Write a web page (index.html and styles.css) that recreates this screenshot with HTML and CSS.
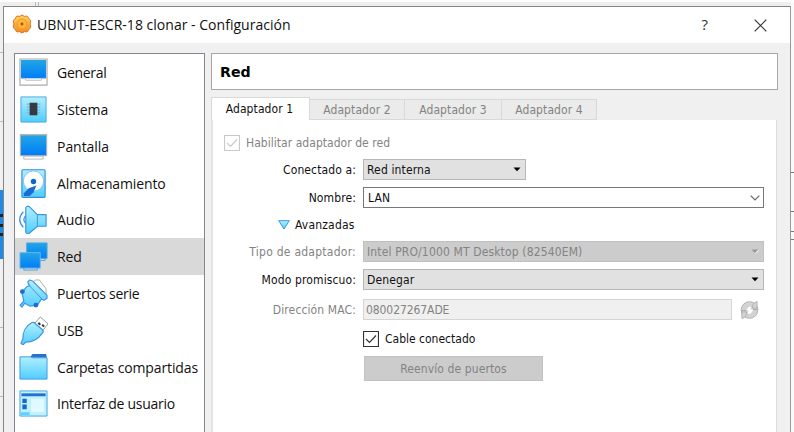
FILE: index.html
```html
<!DOCTYPE html>
<html lang="es">
<head>
<meta charset="utf-8">
<title>UBNUT-ESCR-18 clonar - Configuración</title>
<link rel="stylesheet" href="styles.css">
</head>
<body>
<svg class="defs" width="0" height="0" aria-hidden="true">
  <defs>
    <linearGradient id="screen" x1="0" y1="0" x2="0" y2="1"><stop offset="0" stop-color="#22a6e4"/><stop offset="1" stop-color="#007cf9"/></linearGradient>
    <linearGradient id="sky" x1="0" y1="0" x2="0" y2="1"><stop offset="0" stop-color="#b2efff"/><stop offset="1" stop-color="#50cdff"/></linearGradient>
    <linearGradient id="gold" x1="0" y1="0" x2="0" y2="1"><stop offset="0" stop-color="#ffd75c"/><stop offset="1" stop-color="#f58a1c"/></linearGradient>
  </defs>
</svg>
<div class="backdrop left-edge"><i class="line l1"></i><i class="line l2"></i><i class="tile"></i><i class="line l3"></i><i class="line l4"></i></div>
<div class="backdrop right-edge"><i class="line r1"></i><i class="line r2"></i><i class="line r3"></i><i class="line r4"></i></div>
<i class="notch"></i>
<main class="dialog">
  <header class="titlebar">
    <svg class="gear" viewBox="0 0 20 20"><path d="M7.500 2.500Q10-.5 12.500 2.500 16 1 16.500 4.500 20 6 18 10 20 14 16.500 15.500 16 19 12.500 17.500 10 20.500 7.500 17.500 4 19 3.500 15.500 0 14 2 10 0 6 3.500 4.500 4 1 7.500 2.500z" fill="url(#gold)" stroke="#dd7028" stroke-linejoin="round"/><circle cx="10" cy="10" r="5" fill="#ffb63c" stroke="#ef982b"/><circle cx="10" cy="10" r="1.400" fill="#b9451c"/></svg>
    <h1>UBNUT-ESCR-18 clonar - Configuración</h1>
    <span class="help">?</span>
    <svg class="close" viewBox="0 0 13 13"><path d="M.7.7l11.600 11.600M12.300.7.7 12.300" stroke="#333" stroke-width="1.200"/></svg>
  </header>
  <div class="content">
    <nav class="sidebar">
      <a class="item tight"><svg viewBox="0 0 30 30"><path d="M1 1h28v27H1z" fill="#fff" stroke="#aaa" stroke-width="1.200"/><path d="M2 2h26v19H2z" fill="url(#screen)"/><path d="M2 21h4l1 2h16l1-2h4" fill="none" stroke="#bbb"/></svg><span>General</span></a>
      <a class="item plain"><svg viewBox="0 0 30 30"><path d="M2 2h26v26H2z" fill="url(#sky)" stroke="#4da8df"/><path d="M8 9.500h14M8 12.500h14M8 15.500h14M8 18.500h14" stroke="#8ab"/><path d="M11 8h8v13h-8z" fill="#333a43"/></svg><span>Sistema</span></a>
      <a class="item plain"><svg viewBox="0 0 30 30"><path d="M.8 2h28.400v23H.8z" fill="#b5b5b5"/><path d="M2 3.500h26V24H2z" fill="url(#screen)"/><path d="M5 25h20v3H5z" fill="#fff" stroke="#b5b5b5"/></svg><span>Pantalla</span></a>
      <a class="item"><svg viewBox="0 0 30 30"><rect x="3" y=".8" width="24" height="28.500" rx="1" fill="url(#sky)" stroke="#318fdc" stroke-width="1.200"/><circle cx="15" cy="12.500" r="10.500" fill="#fff" stroke="#80c5ee"/><circle cx="15" cy="13" r="2.800" fill="#0869d3"/><path d="m18 17-8 3-5 5v3h6l4-4z" fill="#176dd1"/></svg><span>Almacenamiento</span></a>
      <a class="item plain"><svg viewBox="0 0 30 30"><path d="M4.500 7Q-3 15 4.500 23M7 11Q3 15 7 19" fill="none" stroke="#3d94e0" stroke-width="1.300"/><path d="M7 3q1-3 4-1l8 8h9v12h-9l-8 7q-3 2-4-1z" fill="url(#sky)" stroke="#3d94e0" stroke-width="1.200"/><path d="M19 10v12" stroke="#3d94e0"/></svg><span>Audio</span></a>
      <a class="item active"><svg viewBox="0 0 30 30"><path d="M8 1h21v16H8z" fill="url(#screen)" stroke="#4aa4df"/><path d="M21 17h6v2h-6z" fill="#c9eaff" stroke="#579ac9"/><path d="M1 11h21v16H1z" fill="url(#screen)" stroke="#68b8ef"/><path d="M5 27h14v2H5z" fill="#c9eaff" stroke="#579ac9"/></svg><span>Red</span></a>
      <a class="item tight"><svg viewBox="0 0 30 30"><path d="m15 3 2-2h4l7 9v7z" fill="#fff" stroke="#aaa"/><path d="m9 3 2-2 3 1 15 15v3l-3 2-3-1-4 6-8 1-5-3-3 4-2-2 4-4-2-9 5-6 3-1z" fill="url(#sky)" stroke="#3d94e0" stroke-width="1.200" stroke-linejoin="round"/><path d="m9 5 15 16" stroke="#3d94e0"/><circle cx="3.500" cy="13" r="2.500" fill="#176dd1"/><circle cx="17.500" cy="27" r="2.500" fill="#176dd1"/></svg><span>Puertos serie</span></a>
      <a class="item tight"><svg viewBox="0 0 30 30"><path d="m16 8 6-7 8 7-6 8z" fill="#fff" stroke="#999"/><path d="m20 7 2 2m2 0 2 2" stroke="#333" stroke-width="2"/><path d="M13 7q2-1 4 1l7 6q2 2 0 4c-5 7-10 9-17 9l-3 3-2-2 2-4C4 16 6 11 13 7z" fill="url(#sky)" stroke="#3d94e0" stroke-width="1.200"/></svg><span>USB</span></a>
      <a class="item"><svg viewBox="0 0 30 30"><path d="m11 5 3-4h14l1 4z" fill="#2b70cf"/><path d="M1 4h11l2 1h15v22H1z" fill="url(#sky)" stroke="#3d9bdd"/></svg><span>Carpetas compartidas</span></a>
      <a class="item tight"><svg viewBox="0 0 30 30"><path d="M1 2h28v26H1z" fill="#bff1ff" stroke="#45a5df"/><path d="M2.500 4.500h25v3h-25z" fill="#246fcf"/><path d="M3.500 10h4.500v4.500H3.500zm0 6h4.500v5H3.500z" fill="#1765ca"/><path d="M12.500 10H26v14H12.500z" fill="#e0faff"/><path d="M2 24h9v3H2z" fill="#5ed2ff"/></svg><span>Interfaz de usuario</span></a>
    </nav>
    <section class="page">
      <h2>Red</h2>
      <div class="tabs"><span class="tab current">Adaptador 1</span><span class="tab">Adaptador 2</span><span class="tab wide">Adaptador 3</span><span class="tab">Adaptador 4</span></div>
      <div class="panel">
        <div class="enable disabled"><svg class="check" viewBox="0 0 16 16"><path d="M.5.5h15v15H.5z"/><path d="m3 8 3.500 3.500 6.500-7"/></svg><span>Habilitar adaptador de red</span></div>
        <div class="row"><label>Conectado a:</label><div class="field combo short"><span>Red interna</span><svg class="arrow" viewBox="0 0 8 5"><path d="M.5.500h7L4 4.300z"/></svg></div></div>
        <div class="row name"><label>Nombre:</label><div class="field input"><span>LAN</span><svg class="chevron" viewBox="0 0 10 6"><path d="m.7.700 4.300 4.300L9.300.7" fill="none" stroke="#666" stroke-width="1.200"/></svg></div></div>
        <div class="advanced"><svg viewBox="0 0 12 10"><path d="M.7.700h10.600L6 9z" fill="url(#sky)" stroke="#3699e5"/></svg><span>Avanzadas</span></div>
        <div class="row disabled type"><label>Tipo de adaptador:</label><div class="field combo"><span>Intel PRO/1000 MT Desktop (82540EM)</span><svg class="arrow" viewBox="0 0 8 5"><path d="M.5.500h7L4 4.300z"/><path class="glint" d="m4 4.700 4-4"/></svg></div></div>
        <div class="row mode"><label>Modo promiscuo:</label><div class="field combo"><span>Denegar</span><svg class="arrow" viewBox="0 0 8 5"><path d="M.5.500h7L4 4.300z"/></svg></div></div>
        <div class="row disabled mac"><label>Dirección MAC:</label><div class="field"><span>080027267ADE</span></div><svg class="refresh" viewBox="0 0 20 20"><circle cx="10" cy="10" r="8.800" fill="#d2d2d2" stroke="#b2b2b2"/><path d="M14 3l4-2v7h-5zM6 17l-4 2v-7h5z" fill="#d2d2d2" stroke="#b2b2b2"/><path d="M2 10.500h4.500L9 6.500h3l-1 3h3.500L11 14H8l1-3.500z" fill="#fff"/><path d="M1.500 10.500h5M13.500 9.500h5" stroke="#aaa"/></svg></div>
        <div class="cable"><svg class="check" viewBox="0 0 16 16"><path d="M.5.5h15v15H.5z"/><path d="m3 8 3.500 3.500 6.500-7"/></svg><span>Cable conectado</span></div>
        <div class="forward"><span>Reenvío de puertos</span></div>
      </div>
    </section>
  </div>
</main>
</body>
</html>
```
FILE: styles.css
```css
* { box-sizing: border-box; }
body { margin: 0; width: 794px; height: 432px; overflow: hidden; position: relative; background: #eee; border-top: 2px solid #fff; font: 12px "DejaVu Sans Condensed", "DejaVu Sans", sans-serif; color: #111; }
svg { display: block; flex: none; }
.defs { position: absolute; }
.backdrop { position: absolute; top: 0; height: 432px; width: 3px; }
.left-edge { left: 0; background: #f0f0f0; }
.right-edge { right: 0; background: #fafafa; }
.line { position: absolute; left: 0; width: 100%; height: 1px; background: #bbb; }
.l1 { top: 50px; } .l2 { top: 119px; } .l3 { top: 325px; } .l4 { top: 394px; }
.r1 { top: 170px; } .r2 { top: 209px; } .r3 { top: 229px; } .r4 { top: 237px; }
.r1, .r2, .r3, .r4 { background: #777; }
.tile { position: absolute; top: 188px; left: 0; width: 3px; height: 69px; background: linear-gradient(#222, #222) 0 24px / 3px 3px no-repeat, linear-gradient(#222, #222) 0 34px / 3px 3px no-repeat, linear-gradient(#222, #222) 0 43px / 3px 3px no-repeat, #1e8ae5; }
.notch { position: absolute; left: 35px; top: 0; width: 4px; height: 4px; border: solid #bbb; border-width: 0 1px; }
.dialog { position: relative; margin: 4px 3px 0; height: 440px; width: 788px; background: #f0f0f0; border: 1px solid #858585; border-right-color: #999; display: flex; flex-direction: column; }
.titlebar { height: 36px; background: #fff; display: flex; align-items: center; padding: 0 23px 0 8px; }
.gear { width: 20px; height: 20px; margin-top: -2px; }
h1 { margin: -1px 0 0 5px; font: 14px "Open Sans", sans-serif; letter-spacing: .02px; white-space: nowrap; flex: 1; }
.help { font: 15px "Open Sans", sans-serif; color: #333; margin: -2px 46px 0 0; }
.close { width: 13px; height: 13px; }
.content { display: flex; flex: 1; padding: 10px 12px 0 10px; gap: 6px; }
.sidebar { width: 191px; border: 1px solid #828790; background: #fff; padding-top: .3px; }
.item { height: 36.800px; display: flex; align-items: center; gap: 9px; padding-left: 4px; font: 14px "Open Sans", sans-serif; letter-spacing: -.13px; white-space: nowrap; }
.item svg { width: 29px; height: 29px; }
.tight { letter-spacing: -.28px; }
.plain { letter-spacing: -.04px; }
.item.active { background: #d9d9d9; }
.page { flex: 1; display: flex; flex-direction: column; }
h2 { margin: 0; height: 37px; border: 1px solid #a7a7a7; background: #fff; font: bold 14.200px/36px "DejaVu Sans", sans-serif; padding-left: 8px; color: #000; }
.tabs { height: 30px; display: flex; align-items: flex-end; padding-top: 8px; }
.tab { width: 95px; height: 21px; border: 1px solid #d9d9d9; border-left-width: 0; text-align: center; line-height: 20px; letter-spacing: .1px; background: #ebebeb; color: #838383; }
.tab.wide { width: 97px; }
.tab.current { width: 99px; height: 23px; line-height: 22px; border-left-width: 1px; border-bottom: 0; background: #fff; color: #111; padding-right: 2px; }
.panel { flex: 1; margin-right: 1px; border: 1px solid #dcdcdc; border-left: 2px solid #e3e3e3; border-top: 0; background: #fff; padding: 15px 12px 0 11px; }
.enable, .cable, .advanced { display: flex; align-items: center; gap: 6px; height: 16px; }
.enable { margin-bottom: 8px; letter-spacing: .04px; }
.check { width: 16px; height: 16px; fill: none; stroke: #333; stroke-width: 1.200; }
.disabled { color: #838383; }
.disabled .check { stroke: #c9c9c9; }
.row { display: flex; align-items: center; height: 21px; }
.row label { width: 132px; margin-right: 7px; text-align: right; white-space: nowrap; letter-spacing: .12px; }
.type label { letter-spacing: .25px; }
.name { margin-top: 7px; }
.field { flex: 1; height: 21px; border: 1px solid #b5b8b8; display: flex; align-items: center; justify-content: space-between; padding: 0 4px 0 3px; white-space: nowrap; letter-spacing: .14px; }
.combo { background: #e1e1e1; }
.short { flex: none; width: 163px; }
.input { border-color: #777; background: #fff; padding-left: 4px; }
.arrow { width: 8px; height: 5px; }
.chevron { width: 10px; height: 6px; margin-right: -1px; }
.advanced { height: 33px; padding-left: 54px; gap: 5px; letter-spacing: .18px; }
.advanced svg { width: 12px; height: 10px; }
.disabled .combo { background: #ccc; border-color: #c0c0c0; }
.disabled .arrow { fill: #999; }
.glint { stroke: #fff; }
.mode { margin-top: 7px; }
.mac { margin-top: 9px; }
.mac .field { flex: none; width: 369px; background: #f0f0f0; border-color: #d5d5d5; padding-left: 2px; letter-spacing: -.08px; }
.refresh { width: 19px; height: 20px; margin-left: 8px; }
.cable { margin: 11px 0 0 139px; }
.forward { margin: 9px 0 0 140px; width: 179px; height: 25px; background: #ccc; border: 1px solid #c2c2c2; color: #838383; text-align: center; line-height: 24px; letter-spacing: .1px; }
```
